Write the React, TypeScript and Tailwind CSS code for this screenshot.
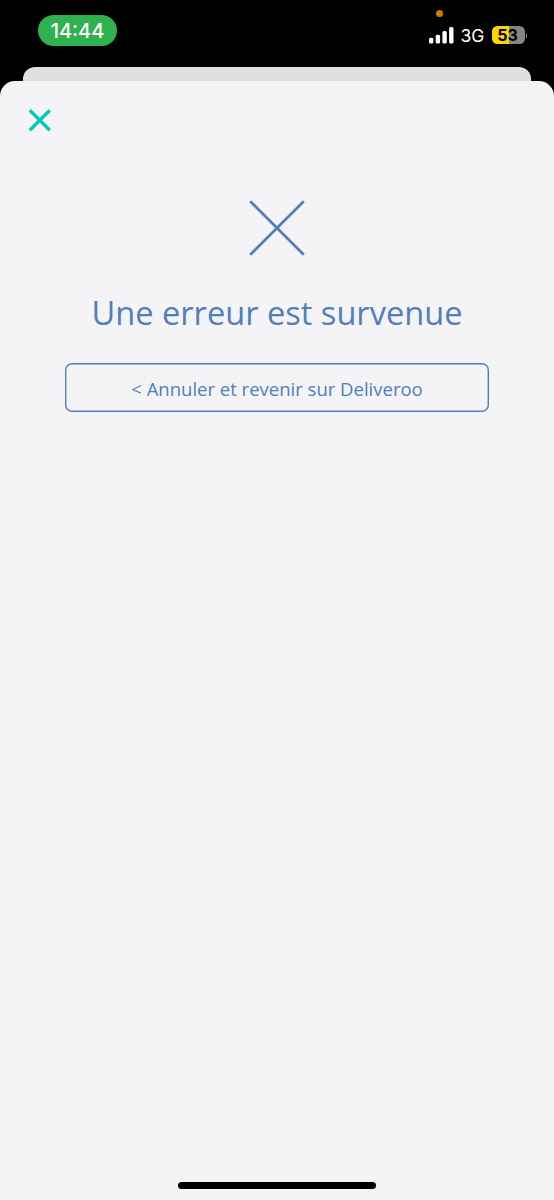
import React from "react";

function StatusBar() {
  return (
    <div className="flex h-[67px] items-start justify-between pl-[38px] pr-[27px] font-[Inter,sans-serif]">
      <div className="mt-[15px] flex h-[31px] w-[79px] items-center justify-center rounded-full bg-[#30b150] pt-px text-[20px] font-[450] leading-none text-white">
        14:44
      </div>
      <div className="relative mt-[24px] flex h-[22px] items-center">
        {/* Microphone-in-use dot */}
        <span className="absolute left-[7px] top-[-14px] size-[7px] rounded-full bg-[#d17a00]" />
        <svg width="25" height="17" viewBox="0 0 25 17" fill="#fff">
          <rect x="0" y="10.8" width="4.4" height="5.7" rx="1.5" />
          <rect x="6.7" y="7.8" width="4.4" height="8.7" rx="1.5" />
          <rect x="13.4" y="4" width="4.4" height="12.5" rx="1.5" />
          <rect x="20.1" y="0" width="4.4" height="16.5" rx="1.5" />
        </svg>
        <span className="ml-[6.5px] mt-px w-[24px] text-[17.5px] leading-none text-white">3G</span>
        <div className="ml-[7px] flex h-[18px] w-[33px] items-center justify-center rounded-[5.5px] bg-[linear-gradient(to_right,#fed702_52%,#858585_52%)] pr-px text-[16px] font-bold leading-none text-black">
          53
        </div>
        <span className="ml-px h-[5px] w-[1.5px] rounded-r-full bg-[#858585]" />
      </div>
    </div>
  );
}

export default function App() {
  return (
    <div className="flex h-[1200px] w-[554px] flex-col overflow-hidden bg-black">
      <StatusBar />
      {/* Edge of the sheet underneath */}
      <div className="mx-[23px] h-[14px] shrink-0 rounded-t-[12px] bg-[#e0e0e0]" />
      <main className="flex flex-1 flex-col items-center rounded-t-[15px] bg-[#f4f4f7] font-['Open_Sans',sans-serif] text-[#507fbb]">
        <button aria-label="Fermer" className="ml-[28px] mt-[28px] self-start">
          <svg width="24" height="24" viewBox="0 0 24 24" stroke="#00ccbc" strokeWidth="3.4">
            <path d="M1.8 1.3L21.8 21.3M21.8 1.3L1.8 21.3" />
          </svg>
        </button>
        <svg className="mt-[67px]" width="56" height="56" viewBox="0 0 56 56" stroke="currentColor" strokeWidth="2.7">
          <path d="M1.2 1.2L54.8 54.8M54.8 1.2L1.2 54.8" />
        </svg>
        <h1 className="mt-[34px] whitespace-nowrap text-[32.6px] leading-[46px]">Une erreur est survenue</h1>
        <button className="mt-[26.5px] h-[49.5px] w-[423.5px] rounded-[7px] pt-[3px] text-[18.5px] inset-ring-[1.4px] inset-ring-[#507fbb]">
          &lt; Annuler et revenir sur Deliveroo
        </button>
        <div className="mb-[11.5px] mt-auto h-[7px] w-[198px] rounded-full bg-black" />
      </main>
    </div>
  );
}
